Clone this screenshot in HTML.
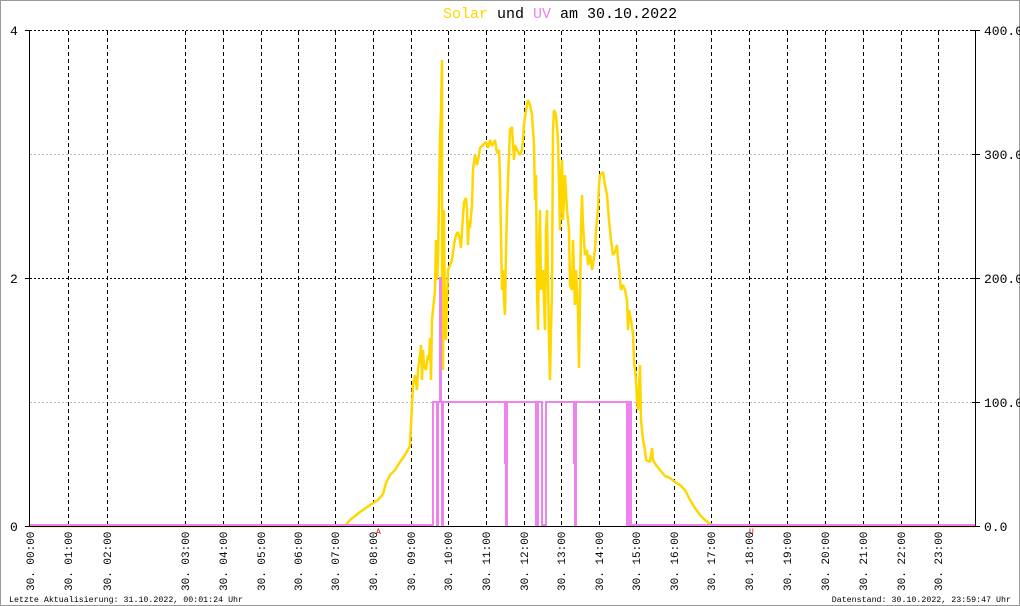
<!DOCTYPE html>
<html><head><meta charset="utf-8"><style>
html,body{margin:0;padding:0;background:#fff}
svg{display:block}
</style></head><body>
<svg width="1020" height="606" viewBox="0 0 1020 606" xmlns="http://www.w3.org/2000/svg" font-family="Liberation Mono, DejaVu Sans Mono, monospace">
<rect x="0.5" y="0.5" width="1019" height="605" fill="#fff" stroke="#999" stroke-width="1"/>
<text y="18" x="443" font-size="15"><tspan fill="#FFD700">Solar</tspan><tspan fill="#000"> und </tspan><tspan fill="#EE82EE">UV</tspan><tspan fill="#000"> am 30.10.2022</tspan></text>
<!-- horizontal grid -->
<g stroke-width="1">
<line x1="30" y1="30.5" x2="975" y2="30.5" stroke="#000" stroke-dasharray="2,2"/>
<line x1="30" y1="154.5" x2="975" y2="154.5" stroke="#bbb" stroke-dasharray="2,2"/>
<line x1="30" y1="278.5" x2="975" y2="278.5" stroke="#000" stroke-dasharray="2,2"/>
<line x1="30" y1="402.5" x2="975" y2="402.5" stroke="#bbb" stroke-dasharray="2,2"/>
</g>
<!-- vertical grid -->
<g stroke="#000" stroke-dasharray="4,3">
<line x1="68.5" y1="31" x2="68.5" y2="526"/>
<line x1="107.5" y1="31" x2="107.5" y2="526"/>
<line x1="185.5" y1="31" x2="185.5" y2="526"/>
<line x1="223.5" y1="31" x2="223.5" y2="526"/>
<line x1="261.5" y1="31" x2="261.5" y2="526"/>
<line x1="298.5" y1="31" x2="298.5" y2="526"/>
<line x1="335.5" y1="31" x2="335.5" y2="526"/>
<line x1="373.5" y1="31" x2="373.5" y2="526"/>
<line x1="411.5" y1="31" x2="411.5" y2="526"/>
<line x1="448.5" y1="31" x2="448.5" y2="526"/>
<line x1="486.5" y1="31" x2="486.5" y2="526"/>
<line x1="524.5" y1="31" x2="524.5" y2="526"/>
<line x1="561.5" y1="31" x2="561.5" y2="526"/>
<line x1="599.5" y1="31" x2="599.5" y2="526"/>
<line x1="636.5" y1="31" x2="636.5" y2="526"/>
<line x1="674.5" y1="31" x2="674.5" y2="526"/>
<line x1="711.5" y1="31" x2="711.5" y2="526"/>
<line x1="749.5" y1="31" x2="749.5" y2="526"/>
<line x1="787.5" y1="31" x2="787.5" y2="526"/>
<line x1="825.5" y1="31" x2="825.5" y2="526"/>
<line x1="863.5" y1="31" x2="863.5" y2="526"/>
<line x1="901.5" y1="31" x2="901.5" y2="526"/>
<line x1="938.5" y1="31" x2="938.5" y2="526"/>
</g>
<!-- axes -->
<g stroke="#000">
<line x1="29.5" y1="30" x2="29.5" y2="527"/>
<line x1="975.5" y1="30" x2="975.5" y2="527"/>
<line x1="25" y1="30.5" x2="30" y2="30.5"/><line x1="25" y1="278.5" x2="30" y2="278.5"/><line x1="25" y1="526.5" x2="30" y2="526.5"/>
<line x1="972" y1="30.5" x2="980" y2="30.5"/><line x1="972" y1="154.5" x2="980" y2="154.5"/><line x1="972" y1="278.5" x2="980" y2="278.5"/><line x1="972" y1="402.5" x2="980" y2="402.5"/><line x1="975" y1="526.5" x2="980" y2="526.5"/>
</g>
<g font-size="13" fill="#000">
<text x="10" y="35">4</text><text x="10" y="283">2</text><text x="10" y="531">0</text>
<text x="984" y="35">400.0</text><text x="984" y="159">300.0</text><text x="984" y="283">200.0</text><text x="984" y="407">100.0</text><text x="984" y="531">0.0</text>
</g>
<!-- yellow solar -->
<polyline fill="none" stroke="#FFD700" stroke-width="2.5" stroke-linejoin="bevel" points="30,526 345,526 350,520 360,512 370,505 378,500 383,494 386,483 390,475 395,470 400,462 405,455 410,446 411,425 413,385 415,375 417,390 418,370 420,355 421,345 422,380 423,350 424,365 426,370 428,355 429,360 430,338 431,380 432,320 433,310 434,300 435,290 436,240 437,280 438,260 439,200 440,140 441,110 442,60 442,315 443,370 444,210 445,330 446,340 447,300 448,270 450,265 452,260 454,245 456,235 458,232 460,240 461,248 462,230 464,202 466,198 467,210 468,245 469,220 470,228 472,205 473,170 475,155 477,165 479,155 480,148 483,145 486,142 488,148 490,140 492,146 495,140 497,153 499,150 500,180 502,290 503,270 504,300 505,315 506,250 507,210 508,180 510,130 512,127 514,160 515,145 517,150 520,155 522,150 523,140 524,125 526,110 528,100 530,105 532,115 534,145 535,200 536,175 537,290 538,330 539,250 540,210 541,290 543,270 544,300 545,330 546,230 547,210 548,280 549,340 550,380 551,330 552,290 553,130 554,110 556,115 558,140 560,230 561,175 562,160 563,220 565,175 567,210 569,230 570,285 572,290 573,240 574,275 575,305 576,270 578,310 579,368 580,300 581,230 582,195 583,225 584,240 585,255 587,250 588,265 590,255 592,270 593,265 595,250 596,230 598,210 599,185 600,175 603,172 605,185 607,195 609,220 611,240 613,255 615,252 617,245 618,260 619,268 621,290 623,285 625,290 627,300 628,330 629,310 631,320 633,335 634,360 636,380 637,400 638,410 639,390 640,365 641,420 643,440 645,450 646,460 650,462 652,448 653,460 656,465 660,470 665,476 670,478 675,482 680,485 685,490 690,500 695,508 700,515 705,520 710,524 716,526 975,526"/>
<!-- pink UV -->
<polyline fill="none" stroke="#EE82EE" stroke-width="2" points="30,525 433,525 433,402 437,402 437,525 438,525 438,402 440,402 440,278 441,278 441,402 442,402 442,525 443,525 443,402 505,402 505,463 506,463 506,525 507,525 507,402 536,402 536,525 538,525 538,402 542,402 542,525 546,525 546,402 574,402 574,463 575,463 575,525 576,525 576,402 627,402 627,525 629,525 629,402 631,402 631,525 975,525"/>
<line x1="30" y1="526.5" x2="975" y2="526.5" stroke="#000" stroke-width="1"/>
<text x="376" y="534" font-size="8" fill="#d00">A</text>
<text x="749" y="534" font-size="8" fill="#d00">U</text>
<!-- x labels -->
<g font-size="11" fill="#000">
<text transform="translate(34,591) rotate(-90)">30. 00:00</text>
<text transform="translate(72,591) rotate(-90)">30. 01:00</text>
<text transform="translate(111,591) rotate(-90)">30. 02:00</text>
<text transform="translate(189,591) rotate(-90)">30. 03:00</text>
<text transform="translate(227,591) rotate(-90)">30. 04:00</text>
<text transform="translate(265,591) rotate(-90)">30. 05:00</text>
<text transform="translate(302,591) rotate(-90)">30. 06:00</text>
<text transform="translate(339,591) rotate(-90)">30. 07:00</text>
<text transform="translate(377,591) rotate(-90)">30. 08:00</text>
<text transform="translate(415,591) rotate(-90)">30. 09:00</text>
<text transform="translate(452,591) rotate(-90)">30. 10:00</text>
<text transform="translate(490,591) rotate(-90)">30. 11:00</text>
<text transform="translate(528,591) rotate(-90)">30. 12:00</text>
<text transform="translate(565,591) rotate(-90)">30. 13:00</text>
<text transform="translate(603,591) rotate(-90)">30. 14:00</text>
<text transform="translate(640,591) rotate(-90)">30. 15:00</text>
<text transform="translate(678,591) rotate(-90)">30. 16:00</text>
<text transform="translate(715,591) rotate(-90)">30. 17:00</text>
<text transform="translate(753,591) rotate(-90)">30. 18:00</text>
<text transform="translate(791,591) rotate(-90)">30. 19:00</text>
<text transform="translate(829,591) rotate(-90)">30. 20:00</text>
<text transform="translate(867,591) rotate(-90)">30. 21:00</text>
<text transform="translate(905,591) rotate(-90)">30. 22:00</text>
<text transform="translate(942,591) rotate(-90)">30. 23:00</text>
</g>
<g font-size="8.3" fill="#000">
<text x="9" y="602">Letzte Aktualisierung: 31.10.2022, 00:01:24 Uhr</text>
<text x="1011" y="602" text-anchor="end">Datenstand: 30.10.2022, 23:59:47 Uhr</text>
</g>
</svg>
</body></html>
